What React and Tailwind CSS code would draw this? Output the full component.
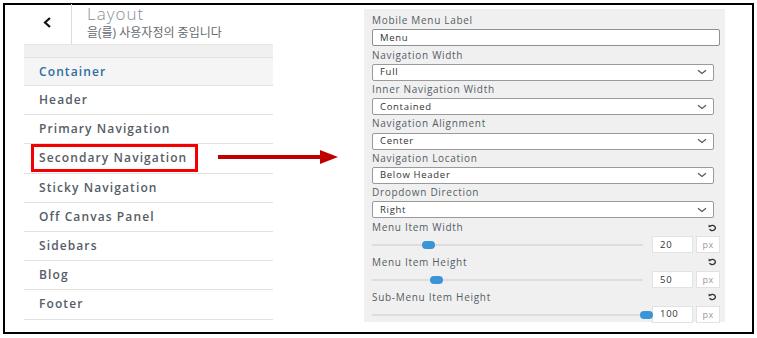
import React from "react";

const items = [
  "Header",
  "Primary Navigation",
  "Secondary Navigation",
  "Sticky Navigation",
  "Off Canvas Panel",
  "Sidebars",
  "Blog",
  "Footer",
];

const selects = [
  ["Navigation Width", "Full"],
  ["Inner Navigation Width", "Contained"],
  ["Navigation Alignment", "Center"],
  ["Navigation Location", "Below Header"],
  ["Dropdown Direction", "Right"],
];

const sliders = [
  ["Menu Item Width", "20", 56],
  ["Menu Item Height", "50", 64],
  ["Sub-Menu Item Height", "100", 274],
];

function Chevron() {
  return (
    <svg width="10" height="6" viewBox="0 0 10 6" className="mr-[6px]">
      <path d="M1 1.2 L5 4.5 L9 1.2" fill="none" stroke="#555" strokeWidth="1.2" />
    </svg>
  );
}

function ResetIcon() {
  return (
    <svg width="9" height="8" viewBox="0 0 9 8" className="mr-[3px]">
      <path d="M2.2 2.2 A3 2.6 0 1 1 1.6 5" fill="none" stroke="#333" strokeWidth="1.4" />
      <path d="M0.6 0.6 L3.2 2.4 L0.6 3.6 Z" fill="#333" />
    </svg>
  );
}

function Label({ children, reset }) {
  return (
    <div className="h-[17.4px] flex items-center justify-between text-[10px] text-[#555d66] tracking-[0.7px]">
      <span>{children}</span>
      {reset && <ResetIcon />}
    </div>
  );
}

export default function App() {
  return (
    <div className="w-[757px] h-[338px] bg-white pt-[3px] pl-[3px]" style={{ fontFamily: '"Open Sans", "Noto Sans CJK KR", sans-serif' }}>
      <div className="relative w-[751px] h-[331px] border-2 border-black flex">
        {/* left customizer column */}
        <div className="ml-[19px] w-[249px] flex flex-col">
          <div className="h-[39px] flex">
            <div className="w-[47px] flex items-center justify-center pb-[4px]">
              <svg width="9" height="11" viewBox="0 0 9 11">
                <path d="M7 1 L2 5.5 L7 10" fill="none" stroke="#111" strokeWidth="2.2" />
              </svg>
            </div>
            <div className="border-l border-[#dcdcdc] pl-[15px] flex flex-col -mt-[1px]">
              <span className="text-[17px] font-light text-[#8a8f94] leading-[20px] tracking-[1px]">Layout</span>
              <span className="text-[12px] text-[#666a6e] leading-[17px]">을(를) 사용자정의 중입니다</span>
            </div>
          </div>
          <div className="h-[13px] bg-[#f0f0f0] border-t border-[#e6e6e6]" />
          <div className="h-[29px] bg-[#f5f5f5] border-y border-[#e2e2e2] flex items-center pl-[15px] text-[12px] font-semibold text-[#2e6da4] tracking-[1.1px]">
            Container
          </div>
          {items.map((it) =>
            it === "Secondary Navigation" ? (
              <div key={it} className="h-[29.2px] border-b border-[#e2e2e2] flex items-center pl-[7px]">
                <span className="h-[28px] border-[3px] border-[#f50000] pl-[5px] pr-[8px] flex items-center text-[12px] font-semibold text-[#555d66] tracking-[1.1px]">
                  {it}
                </span>
              </div>
            ) : (
              <div key={it} className="h-[29.2px] border-b border-[#e2e2e2] flex items-center pl-[15px] text-[12px] font-semibold text-[#555d66] tracking-[1.1px]">
                {it}
              </div>
            )
          )}
        </div>

        {/* annotation arrow */}
        <svg className="absolute left-[213px] top-[143px]" width="122" height="18" viewBox="0 0 122 18">
          <rect x="0" y="7" width="104" height="4" fill="#c00000" />
          <path d="M102 2 L120 9 L102 16 Z" fill="#c00000" />
        </svg>

        {/* right settings panel */}
        <div className="ml-[91px] mt-[4px] w-[361px] h-[313px] bg-[#f0f0f0] pl-[8px] pr-[5px] pt-[3px]">
          <Label>Mobile Menu Label</Label>
          <div className="h-[17px] bg-white border border-[#8c8f94] rounded-[2px] flex items-center pl-[7px] text-[9.5px] text-[#333] tracking-[0.7px]">
            Menu
          </div>
          {selects.map(([l, v]) => (
            <div key={l}>
              <Label>{l}</Label>
              <div className="w-[342px] h-[17px] bg-white border border-[#9a9a9a] rounded-[2px] flex items-center justify-between pl-[7px] text-[9.5px] text-[#333] tracking-[0.7px]">
                <span>{v}</span>
                <Chevron />
              </div>
            </div>
          ))}
          {sliders.map(([l, v, pos]) => (
            <div key={l} className="mt-[0.5px]">
              <Label reset>{l}</Label>
              <div className="h-[17px] flex items-center">
                <div className="relative w-[271px] h-[2px] bg-[#dddddd]">
                  <div className="absolute top-[-3px] w-[13px] h-[8px] rounded-full bg-[#3a95d6]" style={{ left: pos - 6 }} />
                </div>
                <div className="ml-[9px] w-[41px] h-[17px] bg-white border border-[#e2e2e2] flex items-center pl-[7px] text-[9.5px] text-[#333] tracking-[0.7px]">
                  {v}
                </div>
                <div className="ml-[3px] w-[24px] h-[17px] bg-white border border-[#e2e2e2] flex items-center justify-center text-[9px] text-[#999] tracking-[0.5px]">
                  px
                </div>
              </div>
            </div>
          ))}
        </div>
      </div>
    </div>
  );
}
